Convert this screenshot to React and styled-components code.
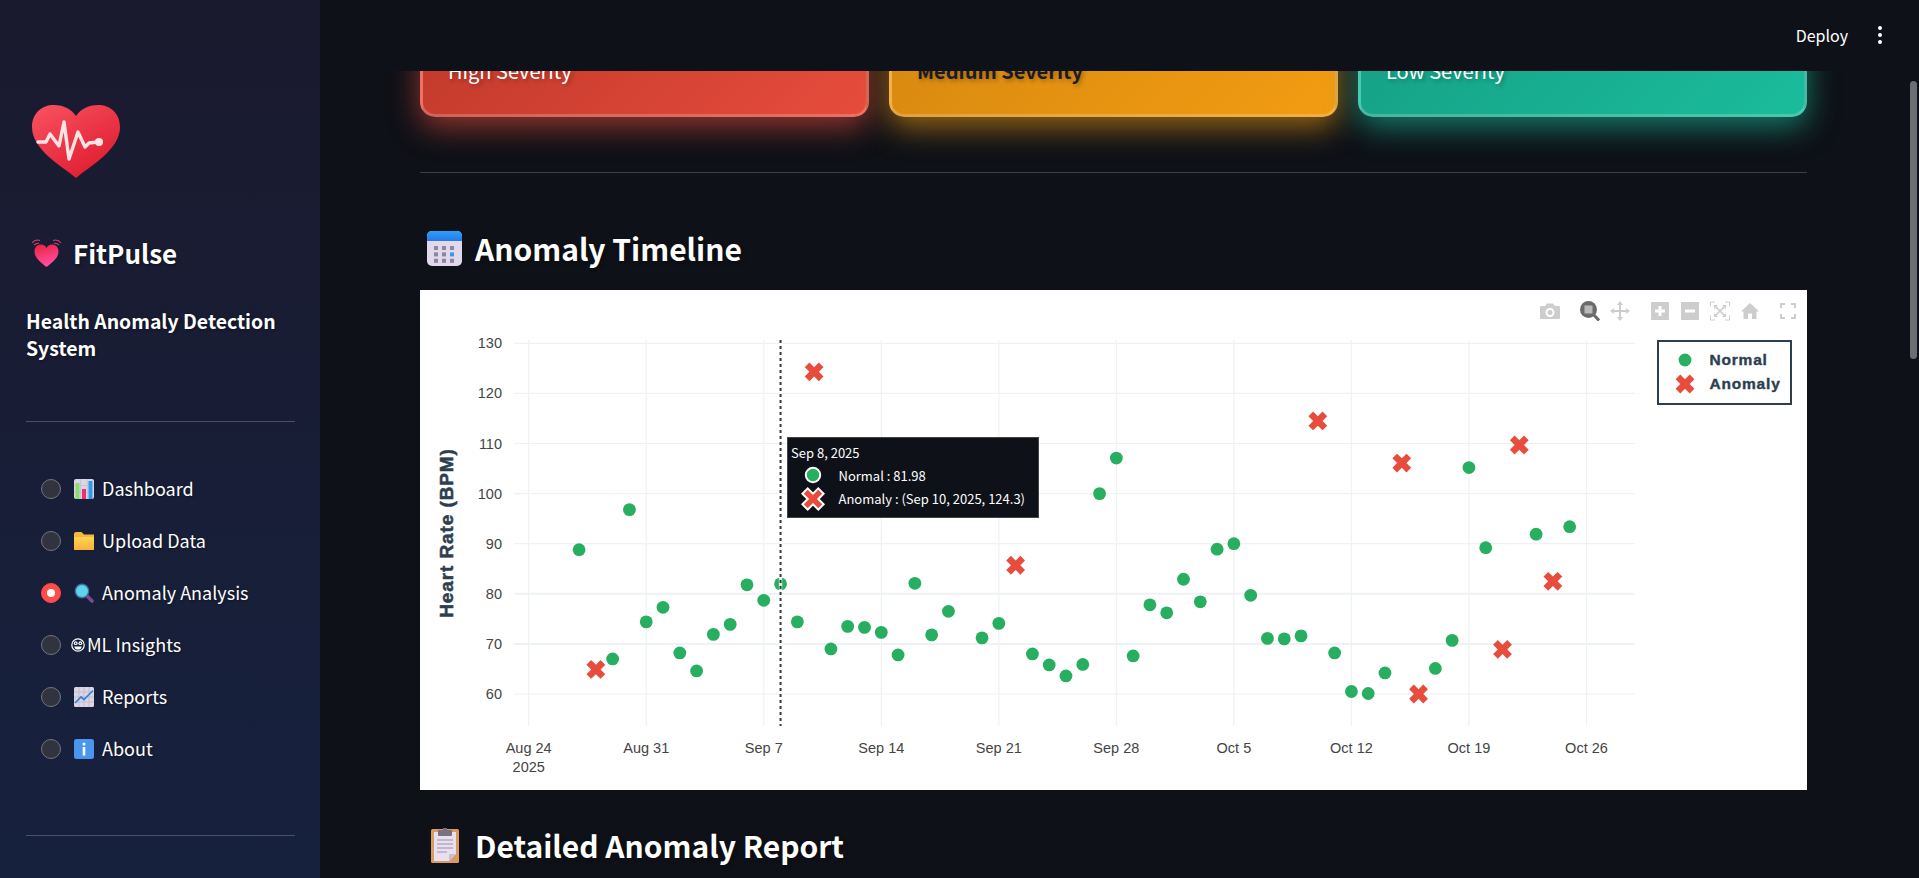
import React from 'react';
import styled, { createGlobalStyle } from 'styled-components';

const UI_FONT = '"Noto Sans CJK SC", "Noto Sans", sans-serif';
const CHART_FONT = '"Liberation Sans", Arial, sans-serif';
const GREEN = '#27ae60';
const RED = '#e74c3c';
const INK = '#2c3e50';

const navItems = [
  { label: 'Dashboard', Icon: BarsEmoji },
  { label: 'Upload Data', Icon: FolderEmoji },
  { label: 'Anomaly Analysis', Icon: LensEmoji, active: true },
  { label: 'ML Insights', Icon: NerdEmoji, tight: true },
  { label: 'Reports', Icon: TrendEmoji },
  { label: 'About', Icon: InfoEmoji },
];

const severities = [
  { label: 'High Severity', from: '#c0392b', to: '#e74c3c', glow: 'rgba(231,76,60,0.6)', text: '#fff' },
  { label: 'Medium Severity', from: '#d68910', to: '#f39c12', glow: 'rgba(243,156,18,0.6)', text: '#1a1a2e', bold: true },
  { label: 'Low Severity', from: '#16a085', to: '#1abc9c', glow: 'rgba(26,188,156,0.6)', text: '#fff' },
];

// day offset from Aug 24, heart rate
const normalPoints = [
  [3, 88.8], [5, 67], [6, 96.8], [7, 74.4], [8, 77.3], [9, 68.2], [10, 64.6], [11, 71.9], [12, 73.9],
  [13, 81.8], [14, 78.7], [15, 81.98], [16, 74.4], [18, 69], [19, 73.5], [20, 73.3], [21, 72.3], [22, 67.8],
  [23, 82.1], [24, 71.8], [25, 76.5], [27, 71.2], [28, 74.1], [30, 68], [31, 65.8], [32, 63.6], [33, 65.9],
  [34, 100], [35, 107.1], [36, 67.6], [37, 77.8], [38, 76.2], [39, 82.9], [40, 78.4], [41, 88.9], [42, 90],
  [43, 79.7], [44, 71.1], [45, 71], [46, 71.6], [48, 68.2], [49, 60.5], [50, 60.1], [51, 64.2], [54, 65.1],
  [55, 70.7], [56, 105.2], [57, 89.2], [60, 91.9], [62, 93.4],
];
const anomalyPoints = [
  [4, 64.9], [17, 124.3], [29, 85.7], [47, 114.5], [52, 106.1], [53, 60], [58, 68.9], [59, 109.7], [61, 82.5],
];

const dayX = (day) => 528.7 + day * 16.79;
const rateY = (rate) => 343.3 + (130 - rate) * 5.01;
const yTicks = [130, 120, 110, 100, 90, 80, 70, 60];
const xTicks = ['Aug 24', 'Aug 31', 'Sep 7', 'Sep 14', 'Sep 21', 'Sep 28', 'Oct 5', 'Oct 12', 'Oct 19', 'Oct 26'];

const crossPath = (r) => `M0,${r}l${r},${r}l${r},-${r}l-${r},-${r}l${r},-${r}l-${r},-${r}l-${r},${r}l-${r},-${r}l-${r},${r}l${r},${r}l-${r},${r}l${r},${r}Z`;

function BeatingHeart() {
  return (
    <svg width="31" height="30" viewBox="0 0 31 30">
      <defs>
        <linearGradient id="beat" x1="0" y1="0" x2="0.3" y2="1">
          <stop offset="0" stopColor="#e8213f" />
          <stop offset="1" stopColor="#ff4fa0" />
        </linearGradient>
      </defs>
      <path d="M15.5 29 C9 24 3.5 19.5 3.5 13.5 C3.5 9 6.5 6.5 10 6.5 C12.5 6.5 14.5 7.8 15.5 10 C16.5 7.8 18.5 6.5 21 6.5 C24.5 6.5 27.5 9 27.5 13.5 C27.5 19.5 22 24 15.5 29Z" fill="url(#beat)" />
      <path d="M1 5 C3 2.5 6 1.5 9 2.5 M3 7 C4.5 5.5 6 5 8 5.3 M30 5 C28 2.5 25 1.5 22 2.5 M28 7 C26.5 5.5 25 5 23 5.3" stroke="#d9406f" strokeWidth="1.1" fill="none" />
    </svg>
  );
}

function HeartLogo() {
  return (
    <svg width="88" height="73" viewBox="0 0 88 73">
      <defs>
        <linearGradient id="logoHeart" x1="0.1" y1="0" x2="0.8" y2="1">
          <stop offset="0" stopColor="#f8505f" />
          <stop offset="1" stopColor="#de1a2e" />
        </linearGradient>
      </defs>
      <path d="M44 73 C30 61 0 45 0 22 C0 8 10 0 22 0 C32 0 39 4 44 11 C49 4 56 0 66 0 C78 0 88 8 88 22 C88 45 58 61 44 73Z" fill="url(#logoHeart)" />
      <path d="M6 37 H14 L18 29 L27 41 L32 17 L37 54 L46 27 L53 42 L57 38 L66 37" fill="none" stroke="#ffe4e6" strokeWidth="3.4" strokeLinejoin="round" strokeLinecap="round" />
      <circle cx="67" cy="37" r="4" fill="#ffe4e6" />
    </svg>
  );
}

function BarsEmoji() {
  return (
    <svg width="20" height="20" viewBox="0 0 20 20">
      <rect width="20" height="20" rx="2" fill="#dcd5e4" />
      <path d="M6.5 0V20M13.3 0V20M0 6.5H20M0 13.3H20" stroke="#c4bcd0" strokeWidth="0.7" />
      <rect x="1.5" y="4" width="4" height="16" fill="#86e06f" />
      <rect x="8" y="10" width="4" height="10" fill="#ef2f74" />
      <rect x="14.5" y="2" width="4" height="18" fill="#2f9bed" />
    </svg>
  );
}

function FolderEmoji() {
  return (
    <svg width="20" height="20" viewBox="0 0 20 20">
      <defs>
        <linearGradient id="folder" x1="0" y1="0" x2="0" y2="1">
          <stop offset="0" stopColor="#ffd44f" />
          <stop offset="1" stopColor="#fdaf3f" />
        </linearGradient>
      </defs>
      <path d="M0 3 Q0 1 2 1 H7.5 L10 3.5 H20 V18 Q20 19 19 19 H1 Q0 19 0 18Z" fill="#f5b93a" />
      <path d="M0 6 H20 V18 Q20 19 19 19 H1 Q0 19 0 18Z" fill="url(#folder)" />
    </svg>
  );
}

function LensEmoji() {
  return (
    <svg width="20" height="20" viewBox="0 0 20 20">
      <path d="M12 12 L18 18" stroke="#7b4a8e" strokeWidth="3.6" strokeLinecap="round" />
      <circle cx="8" cy="8" r="7.4" fill="#3d6f9c" />
      <circle cx="8" cy="8" r="6" fill="#5fd3ec" />
    </svg>
  );
}

function NerdEmoji() {
  return (
    <svg width="14" height="14" viewBox="0 0 14 14">
      <circle cx="7" cy="7" r="6.2" fill="#141d3a" stroke="#fff" strokeWidth="1.2" />
      <circle cx="4.7" cy="5.2" r="1.9" fill="#fff" />
      <circle cx="9.3" cy="5.2" r="1.9" fill="#fff" />
      <circle cx="4.7" cy="5.2" r="0.8" fill="#141d3a" />
      <circle cx="9.3" cy="5.2" r="0.8" fill="#141d3a" />
      <path d="M3.2 8.4 H10.8 Q10 11.6 7 11.6 Q4 11.6 3.2 8.4Z" fill="#fff" />
    </svg>
  );
}

function TrendEmoji() {
  return (
    <svg width="20" height="20" viewBox="0 0 20 20">
      <rect width="20" height="20" rx="1.5" fill="#dcd5e4" />
      <path d="M5 0V20M10 0V20M15 0V20M0 5H20M0 10H20M0 15H20" stroke="#b9b0c8" strokeWidth="0.6" />
      <path d="M1 16 L7 10 L10 12.5 L19 3.5" fill="none" stroke="#2f86d8" strokeWidth="1.7" />
    </svg>
  );
}

function InfoEmoji() {
  return (
    <svg width="20" height="20" viewBox="0 0 20 20">
      <rect width="20" height="20" rx="2.5" fill="#4a95ee" />
      <circle cx="10" cy="5" r="1.5" fill="#fff" />
      <rect x="8.7" y="8" width="2.6" height="8.5" fill="#fff" />
    </svg>
  );
}

function CalendarEmoji() {
  const cells = [];
  [0, 1, 2].forEach((row) => [0, 1, 2].forEach((col) => {
    cells.push(
      <rect
        key={`${row}-${col}`}
        x={7 + col * 8}
        y={15 + row * 6.4}
        width="4"
        height="4"
        fill={row === 1 && col === 2 ? '#2f9bed' : '#8d8698'}
      />
    );
  }));
  return (
    <svg width="35" height="35" viewBox="0 0 35 35">
      <defs>
        <linearGradient id="calendarTop" x1="0" y1="0" x2="0" y2="1">
          <stop offset="0" stopColor="#2aa0fa" />
          <stop offset="1" stopColor="#2a78e8" />
        </linearGradient>
      </defs>
      <rect width="35" height="35" rx="5" fill="#e2d8ee" />
      <path d="M0 10 V5 Q0 0 5 0 H30 Q35 0 35 5 V10Z" fill="url(#calendarTop)" />
      {cells}
    </svg>
  );
}

function ClipboardEmoji() {
  return (
    <svg width="28" height="35" viewBox="0 0 28 35">
      <rect y="1" width="28" height="34" rx="1.5" fill="#dd9a5f" />
      <path d="M3 4 H25 V26 L18 33 H3Z" fill="#e8dff0" />
      <path d="M18 33 L25 26 H18Z" fill="#c9bfd2" />
      <path d="M6 12 H22 M6 16 H22 M6 20 H22 M6 24 H16" stroke="#9a92a6" strokeWidth="1" />
      <rect x="7" y="2" width="14" height="6" rx="1" fill="#77727c" />
      <rect x="12" y="0" width="4" height="3" fill="#77727c" />
    </svg>
  );
}

const iconColor = '#cdcdcd';

function Modebar() {
  return (
    <ModebarWrap>
      <ModeGroup>
        <svg width="20" height="20" viewBox="0 0 20 20">
          <path fillRule="evenodd" fill={iconColor} d="M0 6 Q0 5 1 5 H5 L7 2.5 H13 L15 5 H19 Q20 5 20 6 V17 Q20 18 19 18 H1 Q0 18 0 17Z M10 7 A4.5 4.5 0 1 0 10 16 A4.5 4.5 0 1 0 10 7Z M10 9 A2.5 2.5 0 1 1 10 14 A2.5 2.5 0 1 1 10 9Z" />
        </svg>
      </ModeGroup>
      <ModeGroup>
        <svg width="20" height="20" viewBox="0 0 20 20">
          <path d="M12 12 L19 19.5" stroke="#6a6a6a" strokeWidth="3" />
          <circle cx="8.5" cy="8.5" r="8.5" fill="#6a6a6a" />
          <rect x="4.5" y="4.5" width="8" height="8" fill="#b9b9b9" />
        </svg>
        <svg width="20" height="20" viewBox="0 0 20 20">
          <path d="M10 1 V19 M1 10 H19" stroke={iconColor} strokeWidth="2" />
          <path d="M10 0 L13 4 H7Z M10 20 L13 16 H7Z M0 10 L4 7 V13Z M20 10 L16 7 V13Z" fill={iconColor} />
        </svg>
      </ModeGroup>
      <ModeGroup>
        <svg width="20" height="20" viewBox="0 0 20 20">
          <path fillRule="evenodd" fill={iconColor} d="M1 1 H19 V19 H1Z M8.5 5 V8.5 H5 V11.5 H8.5 V15 H11.5 V11.5 H15 V8.5 H11.5 V5Z" />
        </svg>
        <svg width="20" height="20" viewBox="0 0 20 20">
          <path fillRule="evenodd" fill={iconColor} d="M1 1 H19 V19 H1Z M5 8.5 V11.5 H15 V8.5Z" />
        </svg>
        <svg width="20" height="20" viewBox="0 0 20 20">
          <path d="M5 1 H0.5 V5.5 M15 1 H19.5 V5.5 M5 19 H0.5 V14.5 M15 19 H19.5 V14.5" stroke={iconColor} fill="none" />
          <path d="M5 5 L15 15 M15 5 L5 15" stroke={iconColor} strokeWidth="1.6" />
          <path d="M4 4 H8 L4 8Z M16 4 H12 L16 8Z M4 16 H8 L4 12Z M16 16 H12 L16 12Z" fill={iconColor} />
        </svg>
        <svg width="20" height="20" viewBox="0 0 20 20">
          <path d="M10 2 L19 10.5 H16.5 V18 H12 V12.5 H8 V18 H3.5 V10.5 H1Z" fill={iconColor} />
        </svg>
      </ModeGroup>
      <FullscreenSlot>
        <svg width="20" height="20" viewBox="0 0 20 20">
          <path d="M7 3 H3 V7 M13 3 H17 V7 M7 17 H3 V13 M13 17 H17 V13" stroke={iconColor} strokeWidth="2" fill="none" />
        </svg>
      </FullscreenSlot>
    </ModebarWrap>
  );
}

function GreenDot({ outlined }) {
  return (
    <svg width="18" height="18" viewBox="-9 -9 18 18">
      <circle r={outlined ? 7.2 : 6.4} fill={GREEN} stroke={outlined ? '#fff' : 'none'} strokeWidth="2" />
    </svg>
  );
}

function RedCross({ outlined }) {
  return (
    <svg width="26" height="26" viewBox="-13 -13 26 26">
      <path d={crossPath(outlined ? 5.3 : 4.7)} fill={RED} stroke={outlined ? '#fff' : 'none'} strokeWidth="2" />
    </svg>
  );
}

function TimelineChart() {
  return (
    <ChartPanel>
      <ChartSvg viewBox="420 290 1387 500">
        {yTicks.map((tick) => (
          <g key={tick}>
            <line x1="514" x2="1635" y1={rateY(tick)} y2={rateY(tick)} stroke="#eef2f3" strokeWidth={tick === 70 || tick === 80 ? 2 : 1.2} />
            <AxisTick x="502" y={rateY(tick) + 5} textAnchor="end">{tick}</AxisTick>
          </g>
        ))}
        {xTicks.map((tick, i) => (
          <g key={tick}>
            <line x1={dayX(i * 7)} x2={dayX(i * 7)} y1="340" y2="726" stroke="#eef2f3" strokeWidth="1.2" />
            <AxisTick x={dayX(i * 7)} y="753" textAnchor="middle">{tick}</AxisTick>
          </g>
        ))}
        <AxisTick x={dayX(0)} y="772" textAnchor="middle">2025</AxisTick>
        <AxisTitle transform="translate(453 533) rotate(-90)" textAnchor="middle">Heart Rate (BPM)</AxisTitle>
        {normalPoints.map(([day, rate]) => (
          <circle key={day} cx={dayX(day)} cy={rateY(rate)} r="6.4" fill={GREEN} />
        ))}
        {anomalyPoints.map(([day, rate]) => (
          <path key={day} transform={`translate(${dayX(day)} ${rateY(rate)})`} d={crossPath(4.7)} fill={RED} />
        ))}
        <line x1={dayX(15)} x2={dayX(15)} y1="340" y2="726" stroke="#fff" strokeWidth="3.4" strokeOpacity="0.8" />
        <line x1={dayX(15)} x2={dayX(15)} y1="340" y2="726" stroke="#333a42" strokeWidth="2" strokeDasharray="3 3" />
      </ChartSvg>
      <Modebar />
      <Legend>
        <LegendRow><LegendMark><GreenDot /></LegendMark>Normal</LegendRow>
        <LegendRow><LegendMark><RedCross /></LegendMark>Anomaly</LegendRow>
      </Legend>
      <HoverBox>
        <HoverTitle>Sep 8, 2025</HoverTitle>
        <HoverRow><HoverMark><GreenDot outlined /></HoverMark>Normal : 81.98</HoverRow>
        <HoverRow><HoverMark><RedCross outlined /></HoverMark>Anomaly : (Sep 10, 2025, 124.3)</HoverRow>
      </HoverBox>
    </ChartPanel>
  );
}

export default function App() {
  return (
    <Page>
      <GlobalStyle />
      <Sidebar>
        <Logo><HeartLogo /></Logo>
        <Brand>
          <BeatingHeart />
          <BrandName>FitPulse</BrandName>
        </Brand>
        <Tagline>Health Anomaly Detection System</Tagline>
        <SideRule $top={60} />
        <NavList>
          {navItems.map(({ label, Icon, active, tight }) => (
            <NavItem key={label}>
              <Radio $active={active} />
              <NavIcon $tight={tight}><Icon /></NavIcon>
              <NavLabel>{label}</NavLabel>
            </NavItem>
          ))}
        </NavList>
        <SideRule $top={60} />
      </Sidebar>
      <Main>
        <TopBar>
          <DeployLink>Deploy</DeployLink>
          <MenuDots>
            <span /><span /><span />
          </MenuDots>
        </TopBar>
        <Content>
          <CardRow>
            {severities.map((card) => (
              <SeverityCard key={card.label} $from={card.from} $to={card.to} $glow={card.glow} $text={card.text} $bold={card.bold}>
                {card.label}
              </SeverityCard>
            ))}
          </CardRow>
          <Rule />
          <SectionTitle $top={55}>
            <TitleIcon $left={7} $gap={13}><CalendarEmoji /></TitleIcon>
            Anomaly Timeline
          </SectionTitle>
          <TimelineChart />
          <SectionTitle $top={35}>
            <TitleIcon $left={11} $gap={16}><ClipboardEmoji /></TitleIcon>
            Detailed Anomaly Report
          </SectionTitle>
        </Content>
      </Main>
      <ScrollThumb />
    </Page>
  );
}

const GlobalStyle = createGlobalStyle`
  html, body {
    margin: 0;
    height: 100%;
    overflow: hidden;
    background: #0e1117;
  }
`;

const Page = styled.div`
  position: relative;
  display: flex;
  height: 100vh;
  font-family: ${UI_FONT};
  color: #fff;
  overflow: hidden;
`;

const Sidebar = styled.aside`
  flex: 0 0 320px;
  box-sizing: border-box;
  padding: 105px 25px 0 26px;
  background: linear-gradient(180deg, #1a1a2e 0%, #16213e 100%);
`;

const Logo = styled.div`
  display: flex;
  margin-left: 6px;
  height: 73px;
`;

const Brand = styled.div`
  display: flex;
  align-items: center;
  gap: 11px;
  height: 30px;
  margin: 60px 0 0 5px;
`;

const BrandName = styled.div`
  font-size: 26px;
  font-weight: 600;
  line-height: 30px;
  text-shadow: 1px 1px 3px rgba(0, 0, 0, 0.4);
`;

const Tagline = styled.div`
  margin-top: 39px;
  font-size: 19.4px;
  font-weight: 600;
  line-height: 27px;
  text-shadow: 1px 1px 3px rgba(0, 0, 0, 0.4);
`;

const SideRule = styled.div`
  height: 1px;
  margin-top: ${(props) => props.$top}px;
  background: rgba(255, 255, 255, 0.22);
`;

const NavList = styled.div`
  display: flex;
  flex-direction: column;
  margin: 41px 0 0 15px;
`;

const NavItem = styled.div`
  display: flex;
  align-items: center;
  height: 52px;
  font-size: 18px;
  white-space: nowrap;
  text-shadow: 1px 1px 2px rgba(0, 0, 0, 0.35);
`;

const NavLabel = styled.span`
  padding-bottom: 2px;
`;

const Radio = styled.span`
  position: relative;
  flex: none;
  box-sizing: border-box;
  width: 20px;
  height: 20px;
  border-radius: 50%;
  margin-right: 13px;
  background: ${(props) => (props.$active ? '#ff4b4b' : '#31333f')};
  border: 1px solid ${(props) => (props.$active ? '#ff4b4b' : '#74757c')};

  &::after {
    content: '';
    display: ${(props) => (props.$active ? 'block' : 'none')};
    position: absolute;
    left: 5px;
    top: 5px;
    width: 8px;
    height: 8px;
    border-radius: 50%;
    background: #fff;
  }
`;

const NavIcon = styled.span`
  display: flex;
  flex: none;
  width: ${(props) => (props.$tight ? '16px' : '28px')};
  margin-left: ${(props) => (props.$tight ? '-3px' : '0')};
`;

const Main = styled.main`
  flex: 1;
  min-width: 0;
  display: flex;
  flex-direction: column;
`;

const TopBar = styled.header`
  flex: 0 0 71px;
  box-sizing: border-box;
  display: flex;
  align-items: center;
  justify-content: flex-end;
  gap: 30px;
  padding: 0 37px 1px 0;
  background: #0e1117;
`;

const DeployLink = styled.span`
  font-size: 16px;
  line-height: 20px;
`;

const MenuDots = styled.div`
  display: flex;
  flex-direction: column;
  gap: 3px;

  span {
    width: 4px;
    height: 4px;
    border-radius: 50%;
    background: #fff;
  }
`;

const Content = styled.div`
  flex: 1;
  min-height: 0;
  overflow: hidden;
  padding: 0 112px 0 100px;
`;

const CardRow = styled.div`
  display: grid;
  grid-template-columns: repeat(3, 1fr);
  gap: 20px;
  margin-top: -54px;
`;

const SeverityCard = styled.div`
  box-sizing: border-box;
  height: 100px;
  padding: 38px 0 0 25px;
  border-radius: 15px;
  border: 3px solid rgba(255, 255, 255, 0.22);
  background: linear-gradient(135deg, ${(props) => props.$from}, ${(props) => props.$to});
  box-shadow: 0 10px 30px ${(props) => props.$glow};
  color: ${(props) => props.$text};
  font-size: 20px;
  font-weight: ${(props) => (props.$bold ? 600 : 400)};
  line-height: 26px;
  text-shadow: 2px 2px 4px rgba(0, 0, 0, 0.3);
`;

const Rule = styled.div`
  height: 1px;
  margin-top: 55px;
  background: rgba(250, 250, 250, 0.2);
`;

const SectionTitle = styled.h2`
  display: flex;
  align-items: center;
  height: 40px;
  margin: ${(props) => props.$top}px 0 0;
  font-size: 30px;
  font-weight: 600;
  line-height: 40px;
  white-space: nowrap;
  text-shadow: 2px 2px 4px rgba(0, 0, 0, 0.3);
`;

const TitleIcon = styled.span`
  display: flex;
  margin-left: ${(props) => props.$left}px;
  margin-right: ${(props) => props.$gap}px;
`;

const ChartPanel = styled.div`
  position: relative;
  height: 500px;
  margin-top: 22px;
  background: #fff;
`;

const ChartSvg = styled.svg`
  display: block;
  width: 100%;
  height: 100%;
`;

const AxisTick = styled.text`
  font-family: ${CHART_FONT};
  font-size: 14.5px;
  fill: #444;
`;

const AxisTitle = styled.text`
  font-family: ${CHART_FONT};
  font-size: 19px;
  font-weight: 700;
  letter-spacing: 0.9px;
  fill: ${INK};
  stroke: ${INK};
  stroke-width: 0.5px;
`;

const ModebarWrap = styled.div`
  position: absolute;
  top: 11px;
  right: 9px;
  display: flex;
  gap: 20px;
`;

const ModeGroup = styled.div`
  display: flex;
  gap: 10px;
`;

const FullscreenSlot = styled.div`
  display: flex;
  margin-left: -2px;
`;

const Legend = styled.div`
  position: absolute;
  left: 1237px;
  top: 50px;
  box-sizing: border-box;
  width: 135px;
  height: 65px;
  padding: 5.5px 0 0 12.5px;
  border: 2.5px solid ${INK};
  background: #fff;
  color: ${INK};
  font-family: ${CHART_FONT};
  font-size: 15.5px;
  font-weight: 700;
  letter-spacing: 0.8px;
  -webkit-text-stroke: 0.4px ${INK};
`;

const LegendRow = styled.div`
  display: flex;
  align-items: center;
  height: 24px;
`;

const LegendMark = styled.span`
  display: flex;
  justify-content: center;
  width: 26px;
  margin-right: 12px;
`;

const HoverBox = styled.div`
  position: absolute;
  left: 367px;
  top: 147px;
  box-sizing: border-box;
  width: 252px;
  height: 81px;
  padding: 4px 0 0 3px;
  border: 1px solid #444;
  background: #0e1117;
  color: #fff;
  font-size: 13px;
`;

const HoverTitle = styled.div`
  line-height: 21.5px;
`;

const HoverRow = styled.div`
  display: flex;
  align-items: center;
  height: 23.5px;
`;

const HoverMark = styled.span`
  display: flex;
  justify-content: center;
  width: 26px;
  margin: 0 12.5px 0 9px;
`;

const ScrollThumb = styled.div`
  position: absolute;
  top: 81px;
  right: 2px;
  width: 7px;
  height: 278px;
  border-radius: 4px;
  background: #6c6e72;
`;
